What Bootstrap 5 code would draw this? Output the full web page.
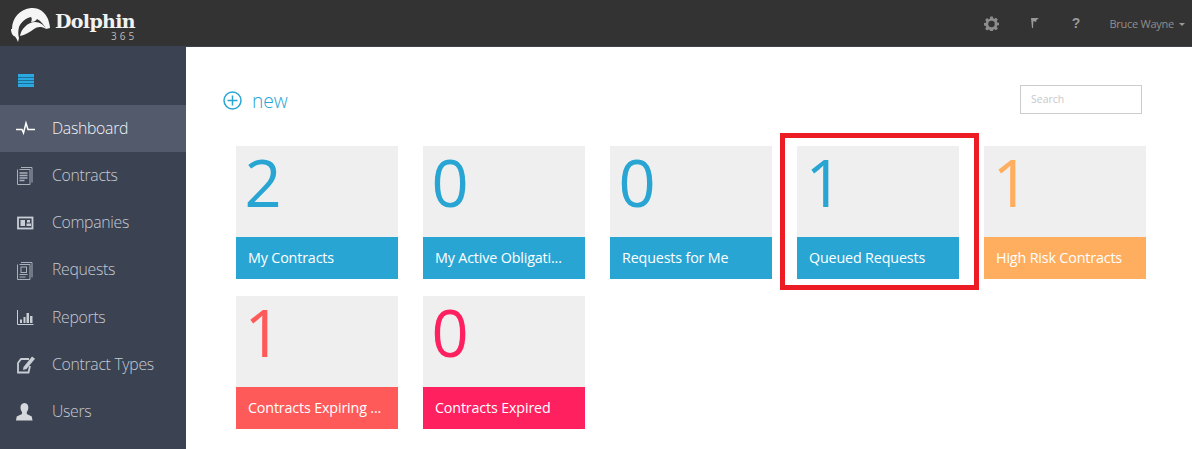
<!DOCTYPE html>
<html lang="en">
<head>
<meta charset="utf-8">
<title>Dolphin 365</title>
<link href="https://cdn.jsdelivr.net/npm/bootstrap@5.3.0/dist/css/bootstrap.min.css" rel="stylesheet">
<style>
html,body{height:449px;overflow:hidden}
body{font-family:"Open Sans","Noto Sans",sans-serif;background:#fff;width:1192px}
.topbar{height:47px;background:#333;border-bottom:1px solid #3b4252;padding-left:11px;padding-right:7px}
.brand-wrap{width:125px;height:46px;position:relative}
.brand-name{font-family:"DejaVu Serif",serif;font-weight:700;font-size:19px;color:#f2f2f2;line-height:1;left:44px;top:12px;position:absolute;letter-spacing:-.65px}
.brand-num{font-family:"Open Sans",sans-serif;font-size:10px;color:#bbb;line-height:1;letter-spacing:3px;position:absolute;left:100px;top:31px;margin:0}
.top-q{color:#999;font-weight:700;font-size:14px;line-height:1;font-family:"Liberation Sans",sans-serif}
.top-user{color:#8f8f8f;font-size:11px;letter-spacing:-.25px;line-height:1}
.top-caret{border-left:3px solid transparent;border-right:3px solid transparent;border-top:3px solid #999;display:inline-block;margin-left:5px;vertical-align:2px}
.shell{height:402px}
.sidebar{width:186px;background:#3b4252;flex:none;height:402px}
.side-toggle{height:58px;padding-left:18px;padding-top:27px}
.side-link{height:47.2px;padding-left:15px;color:#c5cad3;font-size:15.8px;font-weight:300;text-decoration:none;letter-spacing:-.3px}
.side-link.is-on{background:#535a6b;color:#f2f4f7}
.side-ico{width:21px;height:21px;margin-right:16px;flex:none}
.main-area{padding:37px 50px 0 37px;position:relative;min-width:0}
.new-link{color:#29a5d4;font-size:19.3px;font-weight:300;text-decoration:none;height:30px;line-height:30px;padding-top:3px;letter-spacing:-.1px}
.search-box{width:122px;height:29px;border:1px solid #ccc;border-radius:0;font-size:10.5px;padding:0 10px;flex:none;color:#888}
.search-box::placeholder{color:#c8c8c8}
.tile-wrap{padding-left:13px;margin-top:32px;margin-right:-50px;column-gap:25px;row-gap:17px}
.tile{width:162px;height:133px;background:#efefef;text-decoration:none}
.tile-num{height:91px;font-size:65px;line-height:73px;padding-left:8.5px;font-family:"Open Sans",sans-serif;font-weight:400}
.tile-cap{height:42px;line-height:42px;color:#fff;font-size:14.3px;padding:0 12px;white-space:nowrap;letter-spacing:-.15px}
.c-blue .tile-num{color:#29a5d4}.c-blue .tile-cap{background:#29a5d4}
.c-orange .tile-num{color:#ffae5f}.c-orange .tile-cap{background:#ffae5f}
.c-coral .tile-num{color:#ff5a5a}.c-coral .tile-cap{background:#ff5a5a}
.c-pink .tile-num{color:#ff2060}.c-pink .tile-cap{background:#ff2060}
.callout{position:absolute;left:594px;top:86px;width:199px;height:157px;border:5px solid #ed1c24;pointer-events:none}
</style>
</head>
<body>
<nav class="topbar d-flex align-items-center">
  <div class="brand-wrap">
    <svg width="40" height="38" viewBox="0 0 40 38" style="position:absolute;left:0;top:7px">
      <path fill="#f5f5f5" d="M1 22C1 11 9 2 20 1c8-.7 14 4 17 11 1 3 2 7 2 9l-4 1c-2-4-5-8-9-10-1 2-3 3-6 3 1-2 1-4 0-5-5 1-10 5-12 10-1 4-1 8 0 11l-1 4c-1-3-3-6-4-6s-3-3-3-7z"/>
      <path fill="#f5f5f5" d="M9 29c1-7 8-14 15-14 5 0 9 3 11 7-5-3-9-2-12 0-4 3-9 6-14 7z"/>
    </svg>
    <span class="brand-name">Dolphin</span>
    <p class="brand-num">365</p>
  </div>
  <div class="ms-auto d-flex align-items-center">
    <svg width="15" height="15" viewBox="0 0 18 18" style="margin-right:32px"><path fill="#8c8c8c" fill-rule="evenodd" d="M7.400.500h3.200l.4 2.300 1.400.6 2-1.300 2.200 2.200-1.300 2 .6 1.400 2.300.4v3l-2.300.4-.6 1.400 1.300 2-2.200 2.200-2-1.300-1.400.6-.4 2.300H7.400L7 16.800l-1.400-.6-2 1.300-2.200-2.200 1.300-2-.6-1.400L-.2 11.500v-3l2.300-.4.6-1.400-1.300-2L3.600 2.500l2 1.300L7 3.200zM9 5.600a3.900 3.900 0 1 0 0 7.800 3.900 3.900 0 0 0 0-7.800z"/></svg>
    <svg width="8" height="12" viewBox="0 0 8 12" style="margin-right:33px"><path fill="#999" d="M0 1h8L5.500 3 5 5 2.400 4 2 11H1z"/></svg>
    <span class="top-q" style="margin-right:29px">?</span>
    <span class="top-user">Bruce Wayne<i class="top-caret"></i></span>
  </div>
</nav>
<div class="shell d-flex">
  <aside class="sidebar">
    <div class="side-toggle d-flex align-items-start">
      <svg width="16" height="13" viewBox="0 0 16 13"><rect width="16" height="13" fill="#29a9e0"/><path stroke="#1c6f96" d="M0 3.500h16M0 6.500h16M0 9.500h16"/></svg>
    </div>
    <a class="side-link is-on d-flex align-items-center" href="#">
      <svg class="side-ico" viewBox="0 0 21 21"><path fill="none" stroke="#fff" stroke-width="1.500" d="M1 11.500h6l1.500 3.500 2.500-10 2 6.500h7"/></svg>Dashboard</a>
    <a class="side-link d-flex align-items-center" href="#">
      <svg class="side-ico" viewBox="0 0 21 21"><path fill="none" stroke="#aab0ba" d="M6 2.500h11v15M4.500 4.500H15v15H2.500v-15"/><path stroke="#aab0ba" stroke-width="1.500" d="M4.500 8h8M4.500 10.500h8M4.500 13h8M4.500 15.500h5"/></svg>Contracts</a>
    <a class="side-link d-flex align-items-center" href="#">
      <svg class="side-ico" viewBox="0 0 21 21"><rect x="3" y="5.500" width="14.500" height="11" fill="none" stroke="#c9cdd4" stroke-width="1.800"/><rect x="5.500" y="8" width="4.500" height="6" fill="#c9cdd4"/><path fill="#c9cdd4" d="M12 8h3v2.500h-3zM11.500 11.500h4.500V14h-4.500z"/></svg>Companies</a>
    <a class="side-link d-flex align-items-center" href="#">
      <svg class="side-ico" viewBox="0 0 21 21"><path fill="none" stroke="#aab0ba" d="M6 2.500h11v15M4.500 4.500H15v15H2.500v-15"/><rect x="6" y="7" width="5.500" height="5.500" fill="none" stroke="#aab0ba"/><path stroke="#aab0ba" d="M4.500 14.500h8M4.500 17h6"/></svg>Requests</a>
    <a class="side-link d-flex align-items-center" href="#">
      <svg class="side-ico" viewBox="0 0 21 21"><path fill="none" stroke="#c9cdd4" d="M2.500 3v14.500H18.500"/><path fill="#c9cdd4" d="M5 12.500h2v3.500H5zM8.500 10h2v6h-2zM11.500 6h2.500v10h-2.500zM15 9h2.500v7H15z"/></svg>Reports</a>
    <a class="side-link d-flex align-items-center" href="#">
      <svg class="side-ico" viewBox="0 0 21 21"><path fill="none" stroke="#c9cdd4" stroke-width="1.800" d="M14 5H6L3 9v9.500h10.500L15 12"/><path fill="#c9cdd4" d="M8.500 13 17 2.500l3 2.300L11.500 15l-3.500 1z"/></svg>Contract Types</a>
    <a class="side-link d-flex align-items-center" href="#">
      <svg class="side-ico" viewBox="0 0 21 21"><path fill="#d5d8dd" d="M9.500 2c2.800 0 4 2.200 3.800 5-.1 1.800-.8 3.200-1.500 4v2l5 2.500.7 4H1l.7-4L7 13v-2c-.7-.8-1.400-2.200-1.500-4C5.300 4.200 6.700 2 9.500 2z"/></svg>Users</a>
  </aside>
  <main class="main-area flex-grow-1">
    <div class="d-flex align-items-center justify-content-between">
      <a class="new-link d-flex align-items-center" href="#">
        <svg width="19" height="19" viewBox="0 0 19 19" style="margin-right:10px"><circle cx="9.500" cy="9.500" r="8.500" fill="none" stroke="#29a5d4" stroke-width="1.500"/><path stroke="#29a5d4" stroke-width="1.500" d="M4.500 9.500h10M9.500 4.500v10"/></svg>new</a>
      <input class="form-control search-box" type="text" placeholder="Search">
    </div>
    <div class="tile-wrap d-flex flex-wrap">
      <a class="tile c-blue d-block" href="#"><div class="tile-num">2</div><div class="tile-cap">My Contracts</div></a>
      <a class="tile c-blue d-block" href="#"><div class="tile-num">0</div><div class="tile-cap">My Active Obligati...</div></a>
      <a class="tile c-blue d-block" href="#"><div class="tile-num">0</div><div class="tile-cap">Requests for Me</div></a>
      <a class="tile c-blue d-block" href="#"><div class="tile-num">1</div><div class="tile-cap">Queued Requests</div></a>
      <a class="tile c-orange d-block" href="#"><div class="tile-num">1</div><div class="tile-cap">High Risk Contracts</div></a>
      <a class="tile c-coral d-block" href="#"><div class="tile-num">1</div><div class="tile-cap">Contracts Expiring ...</div></a>
      <a class="tile c-pink d-block" href="#"><div class="tile-num">0</div><div class="tile-cap">Contracts Expired</div></a>
    </div>
    <div class="callout"></div>
  </main>
</div>
<script src="https://cdn.jsdelivr.net/npm/bootstrap@5.3.0/dist/js/bootstrap.bundle.min.js"></script>
</body>
</html>
